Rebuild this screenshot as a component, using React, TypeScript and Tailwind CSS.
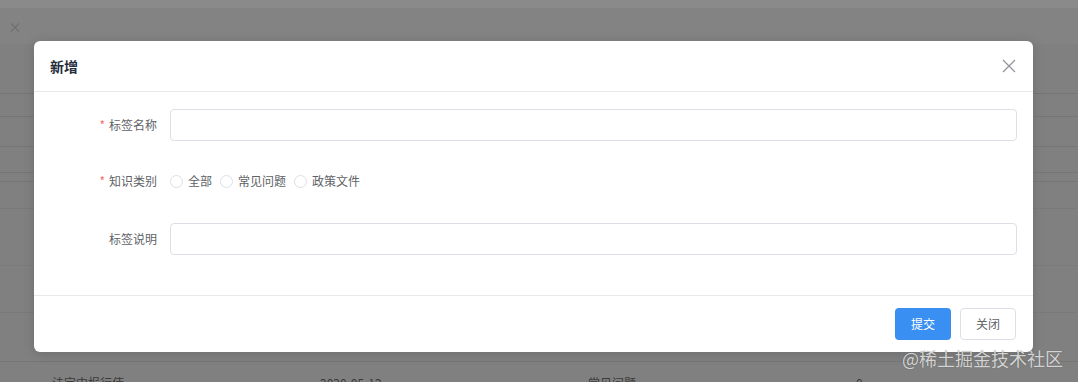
import React from 'react';

const font = { fontFamily: '"Noto Sans CJK SC", "Noto Sans", sans-serif' };

const Label: React.FC<{ text: string; required?: boolean }> = ({ text, required }) => (
  <div className="w-[136px] pr-[13px] flex items-center justify-end text-[12px] text-[#606266]">
    {required && <span className="text-[#f56c6c] mr-[4px]">*</span>}
    {text}
  </div>
);

const Radio: React.FC<{ text: string }> = ({ text }) => (
  <label className="flex items-center mr-[8px] text-[12px] text-[#606266]">
    <span className="w-[13px] h-[13px] rounded-full border border-[#dcdfe6] bg-white mr-[5px]" />
    {text}
  </label>
);

export default function App() {
  return (
    <div className="relative w-[1078px] h-[382px] overflow-hidden bg-[#808080]" style={font}>
      {/* page behind the mask */}
      <div className="flex flex-col">
        <div className="h-[8px] bg-[#8a8a8a]" />
        <div className="h-[36px] bg-[#838383] flex items-center">
          <div className="w-[30px] h-[30px] flex items-center justify-center text-[14px] text-[#6e6e6e]">×</div>
        </div>
        <div className="h-[50px] border-b border-[#767676]" />
        <div className="h-[23px] border-b border-[#767676]" />
        <div className="h-[30px] border-b border-[#767676]" />
        <div className="h-[26px] border-b border-[#767676]" />
        <div className="h-[9px] border-b border-[#767676]" />
        <div className="h-[27px] border-b border-[#7a7a7a]" />
        <div className="h-[57px] border-b border-[#7a7a7a]" />
        <div className="h-[47px] border-b border-[#7a7a7a]" />
        <div className="h-[49px] border-b border-[#767676]" />
        <div className="flex pt-[12px] text-[12px] text-[#3a3a3a]">
          <span className="w-[320px] pl-[52px]">法定中报行使</span>
          <span className="w-[268px]">2020-05-12</span>
          <span className="w-[268px]">常见问题</span>
          <span>0</span>
        </div>
      </div>

      {/* dialog */}
      <div className="absolute inset-0 pt-[41px]">
        <div className="ml-[34px] w-[999px] bg-white rounded-[6px] shadow-[0_2px_12px_rgba(0,0,0,0.15)]">
          <div className="h-[51px] px-[16px] flex items-center justify-between border-b border-[#e8e8e8]">
            <span className="text-[14px] font-bold text-[#1f2d3d]">新增</span>
            <svg width="14" height="14" viewBox="0 0 14 14" className="mr-[1px]">
              <path d="M1 1L13 13M13 1L1 13" stroke="#909399" strokeWidth="1.2" />
            </svg>
          </div>
          <div className="pt-[17px] pb-[40px] pr-[16px] flex flex-col">
            <div className="flex h-[32px]">
              <Label text="标签名称" required />
              <div className="flex-1 rounded-[4px] border border-[#dcdfe6]" />
            </div>
            <div className="flex h-[32px] mt-[24px]">
              <Label text="知识类别" required />
              <div className="flex items-center">
                <Radio text="全部" />
                <Radio text="常见问题" />
                <Radio text="政策文件" />
              </div>
            </div>
            <div className="flex h-[32px] mt-[26px]">
              <Label text="标签说明" />
              <div className="flex-1 rounded-[4px] border border-[#dcdfe6]" />
            </div>
          </div>
          <div className="border-t border-[#e8e8e8] pt-[12px] pb-[12px] pr-[17px] flex justify-end gap-[9px]">
            <button className="w-[56px] h-[32px] rounded-[4px] bg-[#3a8ff2] text-white text-[12px]">提交</button>
            <button className="w-[56px] h-[32px] rounded-[4px] border border-[#dcdfe6] bg-white text-[#606266] text-[12px]">关闭</button>
          </div>
        </div>
      </div>

      {/* watermark */}
      <div className="absolute left-[902px] top-[345px] text-[18px] text-[#d4d4d4] [text-shadow:0_0_1px_rgba(0,0,0,0.35)]">
        @稀土掘金技术社区
      </div>
    </div>
  );
}
